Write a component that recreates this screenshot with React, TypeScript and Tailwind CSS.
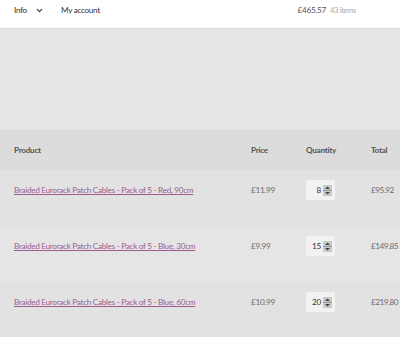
import { ChevronDown } from "lucide-react";

const rows = [
  { name: "Braided Eurorack Patch Cables - Pack of 5 - Red, 90cm", price: "£11.99", qty: "8", total: "£95.92", bg: "bg-[#e2e2e2]" },
  { name: "Braided Eurorack Patch Cables - Pack of 5 - Blue, 30cm", price: "£9.99", qty: "15", total: "£149.85", bg: "bg-[#e5e5e5]" },
  { name: "Braided Eurorack Patch Cables - Pack of 5 - Blue, 60cm", price: "£10.99", qty: "20", total: "£219.80", bg: "bg-[#e2e2e2]" },
];

function Spinner() {
  return (
    <svg width="9" height="11" viewBox="0 0 9 11" className="shrink-0">
      <rect x="0" y="0" width="9" height="11" fill="#c8c8c8" />
      <rect x="0" y="5" width="9" height="1" fill="#9a9a9a" />
      <path d="M2 4 L4.5 1.5 L7 4 Z" fill="#444" />
      <path d="M2 7 L4.5 9.5 L7 7 Z" fill="#444" />
    </svg>
  );
}

export default function App() {
  return (
    <div className="w-[400px] h-[337px] overflow-hidden bg-[#e6e6e6] font-['Lato',sans-serif] text-[8.2px] tracking-[-0.3px]">
      {/* Top bar */}
      <div className="h-[29px] bg-white border-b border-[#dcdcdc] flex items-start px-[14px] pt-[4px]">
        <div className="flex items-center gap-[8px] text-[#333]">
          <span>Info</span>
          <ChevronDown size={9} strokeWidth={3} />
        </div>
        <span className="ml-[17px] text-[#333]">My account</span>
        <div className="ml-auto mr-[30px] flex items-center gap-[4px]">
          <span className="text-[#555]">£465.57</span>
          <span className="text-[#aaa] text-[7.5px]">43 items</span>
        </div>
      </div>

      {/* Spacer */}
      <div className="h-[101px]" />

      {/* Cart table */}
      <div className="grid grid-cols-[237px_55px_65px_1fr] h-[40px] items-center px-[14px] bg-[#dcdcdc] font-bold text-[#555]">
        <span>Product</span>
        <span>Price</span>
        <span>Quantity</span>
        <span>Total</span>
      </div>
      {rows.map((r) => (
        <div key={r.name} className={`grid grid-cols-[237px_55px_65px_1fr] h-[56px] items-start pt-[10px] pl-[14px] ${r.bg}`}>
          <div className="h-[20px] flex items-center">
            <a className="text-[#9a5d8e] underline">{r.name}</a>
          </div>
          <div className="h-[20px] flex items-center text-[#6d6d6d]">{r.price}</div>
          <div className="flex">
            <div className="w-[29px] h-[20px] bg-[#f2f2f2] flex items-center justify-end gap-[2px] pr-[3px] text-[#333]">
              <span>{r.qty}</span>
              <Spinner />
            </div>
          </div>
          <div className="h-[20px] flex items-center text-[#6d6d6d] tracking-[-0.5px] whitespace-nowrap">{r.total}</div>
        </div>
      ))}
    </div>
  );
}
